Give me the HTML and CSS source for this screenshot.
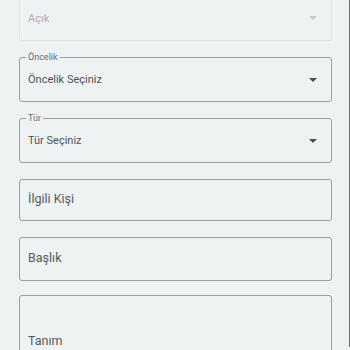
FILE: index.html
```html
<!DOCTYPE html>
<html lang="tr">
<head>
  <meta charset="UTF-8">
  <meta name="viewport" content="width=device-width, initial-scale=1.0">
  <title>Talep Formu</title>
  <link rel="stylesheet" href="styles.css">
</head>
<body>
  <div class="page">
    <form class="form">
      <!-- Durum (pasif) -->
      <div class="field field-disabled">
        <span class="value">Açık</span>
        <span class="arrow"></span>
      </div>

      <div class="field field-select">
        <span class="label">Öncelik</span>
        <span class="value">Öncelik Seçiniz</span>
        <span class="arrow"></span>
      </div>

      <div class="field field-select">
        <span class="label">Tür</span>
        <span class="value">Tür Seçiniz</span>
        <span class="arrow"></span>
      </div>

      <div class="field field-input field-short">
        <span class="placeholder">İlgili Kişi</span>
      </div>

      <div class="field field-input">
        <span class="placeholder">Başlık</span>
      </div>

      <div class="field field-area">
        <span class="placeholder">Tanım</span>
      </div>
    </form>
  </div>
</body>
</html>
```

FILE: styles.css
```css
html, body {
  margin: 0;
  padding: 0;
  height: 100%;
}
body {
  font-family: Roboto, "Noto Sans", Arial, sans-serif;
  background: #eff2f3;
  color: #444;
  overflow: hidden;
}
.page {
  height: 100%;
  border-right: 1px solid #6a6d6e;
  box-sizing: border-box;
}
.form {
  display: flex;
  flex-direction: column;
  gap: 16px;
  width: 313px;
  margin: -3px 0 0 19px;
}
.field {
  position: relative;
  box-sizing: border-box;
  height: 45px;
  flex-shrink: 0;
  display: flex;
  align-items: center;
  padding: 0 14px 0 8px;
  border: 1px solid #9c9fa0;
  border-radius: 3px;
}
.field-disabled {
  height: 44px;
  padding-bottom: 2px;
  border-color: #dfe2e3;
}
.field-input {
  height: 44px;
  padding-bottom: 3px;
}
.field-short {
  height: 42px;
}
.field-area {
  height: 80px;
  margin-top: -2px;
  align-items: flex-start;
  padding-top: 37px;
}
.label {
  position: absolute;
  top: -6px;
  left: 6px;
  padding: 0 2px;
  font-size: 9px;
  line-height: 10px;
  color: #6a6c6d;
  background: #eff2f3;
}
.value {
  flex: 1;
  font-size: 11px;
  color: #505253;
}
.field-disabled .value {
  color: #aeb0b1;
}
.placeholder {
  font-size: 12.5px;
  color: #56585a;
}
.arrow {
  width: 0;
  height: 0;
  border-left: 4px solid transparent;
  border-right: 4px solid transparent;
  border-top: 4px solid #4a4c4d;
}
.field-disabled .arrow {
  border-top-color: #c8cacb;
}
```
